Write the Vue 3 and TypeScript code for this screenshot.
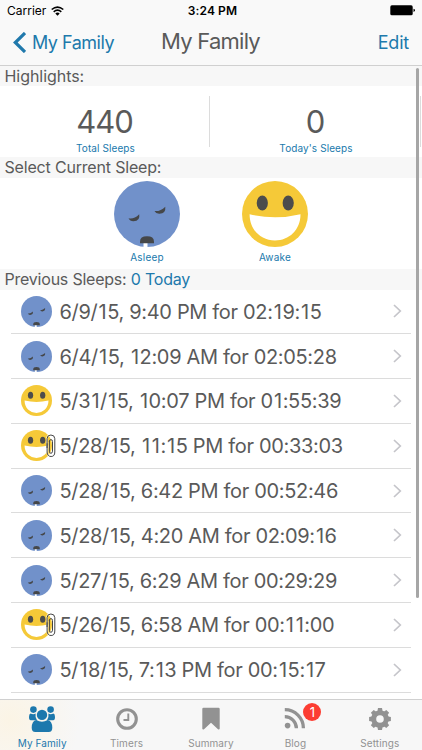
<script setup lang="ts">
import { defineComponent, h } from 'vue'

type Mood = 'asleep' | 'awake'

interface SleepEntry {
  mood: Mood
  label: string
  attachment?: boolean
}

interface Tab {
  name: string
  icon: 'family' | 'clock' | 'bookmark' | 'feed' | 'gear'
  active?: boolean
  badge?: number
}

const entries: SleepEntry[] = [
  { mood: 'asleep', label: '6/9/15, 9:40 PM for 02:19:15' },
  { mood: 'asleep', label: '6/4/15, 12:09 AM for 02:05:28' },
  { mood: 'awake', label: '5/31/15, 10:07 PM for 01:55:39' },
  { mood: 'awake', label: '5/28/15, 11:15 PM for 00:33:03', attachment: true },
  { mood: 'asleep', label: '5/28/15, 6:42 PM for 00:52:46' },
  { mood: 'asleep', label: '5/28/15, 4:20 AM for 02:09:16' },
  { mood: 'asleep', label: '5/27/15, 6:29 AM for 00:29:29' },
  { mood: 'awake', label: '5/26/15, 6:58 AM for 00:11:00', attachment: true },
  { mood: 'asleep', label: '5/18/15, 7:13 PM for 00:15:17' },
]

const tabs: Tab[] = [
  { name: 'My Family', icon: 'family', active: true },
  { name: 'Timers', icon: 'clock' },
  { name: 'Summary', icon: 'bookmark' },
  { name: 'Blog', icon: 'feed', badge: 1 },
  { name: 'Settings', icon: 'gear' },
]

const teeth = [0, 45, 90, 135, 180, 225, 270, 315]

// The narrow "1" gets its own span so that it can be spaced like the other digits.
const pieces = (label: string): string[] => label.split(/(1)/).filter(Boolean)

const Face = defineComponent({
  props: { mood: { type: String, required: true } },
  setup(props) {
    return () =>
      h(
        'svg',
        { viewBox: '0 0 66 66' },
        props.mood === 'asleep'
          ? [
              h('circle', { cx: 33, cy: 33, r: 33, fill: '#7191ca' }),
              h('path', { d: 'M14.5 37.3Q20 38.5 25.2 33.2Q26.5 40 19.5 40.2Q16 40.3 14.5 37.3Z', fill: '#454749' }),
              h('path', { d: 'M40.5 30Q46 30.8 51.3 25.7Q52 32.5 45.5 32.8Q42 33 40.5 30Z', fill: '#454749' }),
              h('path', { d: 'M29.5 61.5h4v5h-4z', fill: '#fff' }),
              h('path', { d: 'M26 60.5Q26 55.3 33 55.3Q40 55.3 40 60.5V62.3H26Z', fill: '#454749' }),
            ]
          : [
              h('circle', { cx: 33, cy: 33, r: 33, fill: '#f5c938' }),
              h('ellipse', { cx: 20.3, cy: 22, rx: 5.6, ry: 7.5, fill: '#4c4c4c' }),
              h('ellipse', { cx: 46.2, cy: 22, rx: 5.6, ry: 7.5, fill: '#4c4c4c' }),
              h('path', { d: 'M7.6 33.2Q33 39.4 58.5 33.2C58.5 49 47 59.4 33 59.4S7.6 49 7.6 33.2Z', fill: '#fff' }),
            ],
      )
  },
})
</script>

<template>
  <main class="screen">
    <header class="top">
      <div class="status">
        <div class="carrier">
          <span>Carrier</span>
          <svg class="wifi" viewBox="0 0 13 10">
            <path d="M.7 3.5Q6.5-1.4 12.3 3.5M2.7 5.8Q6.5 2.5 10.3 5.8" fill="none" stroke="#000" stroke-width="1.6" />
            <path d="M4.3 7.5Q6.5 5.6 8.7 7.5L6.5 9.8Z" />
          </svg>
        </div>
        <span class="time">3:24 PM</span>
        <svg class="battery" viewBox="0 0 26 11">
          <rect x=".3" y=".3" width="22.4" height="10" rx="1.6" />
          <path d="M23.5 3.7Q25 4 25 5.3T23.5 7Z" />
        </svg>
      </div>
      <nav class="nav">
        <button class="back">
          <svg viewBox="0 0 13 21"><path d="M12 1L2.3 10.5L12 20" fill="none" stroke="currentColor" stroke-width="3.2" /></svg>
          <span>My Family</span>
        </button>
        <h1>My Family</h1>
        <button class="edit">Edit</button>
      </nav>
    </header>

    <h2 class="section">Highlights:</h2>
    <div class="stats">
      <div class="stat"><strong>440</strong><small>Total Sleeps</small></div>
      <div class="stat"><strong>0</strong><small>Today's Sleeps</small></div>
    </div>

    <h2 class="section second">Select Current Sleep:</h2>
    <div class="moods">
      <button class="mood"><Face mood="asleep" class="big-face" /><span>Asleep</span></button>
      <button class="mood"><Face mood="awake" class="big-face" /><span>Awake</span></button>
    </div>

    <h2 class="section third">Previous Sleeps: <b>0 Today</b></h2>
    <ul class="list">
      <li v-for="entry in entries" :key="entry.label">
        <div class="thumb">
          <Face :mood="entry.mood" class="small-face" />
          <svg v-if="entry.attachment" class="clip" viewBox="0 0 10 24">
            <path d="M1 14V4.7Q1 1 4.8 1T8.8 4.7V18Q8.8 22.5 5.1 22.5T1.4 18V8" fill="none" stroke="#fff" stroke-width="2.2" opacity=".6" />
            <path d="M1.1 14V4.7Q1.1 1 4.9 1T8.8 4.7V18Q8.8 22.5 5.1 22.5T1.1 18V9.3M3.4 7V17.2Q3.4 19.3 4.9 19.3T6.5 17.2V7.5Q6.5 5.6 4.9 5.6T3.4 7.5" fill="none" stroke="#454545" stroke-width="1" />
          </svg>
        </div>
        <span class="label"><span v-for="(piece, i) in pieces(entry.label)" :key="i" :class="{ one: piece === '1' }">{{ piece }}</span></span>
        <svg class="chevron" viewBox="0 0 9 14"><path d="M1 1L7.3 7L1 13" fill="none" stroke="#c5c5ca" stroke-width="1.7" /></svg>
      </li>
    </ul>

    <footer class="tabs">
      <button v-for="tab in tabs" :key="tab.name" class="tab" :class="{ active: tab.active }">
        <span class="glyph">
          <svg v-if="tab.icon === 'family'" viewBox="0 0 26 26" fill="currentColor">
            <circle cx="4.4" cy="3.6" r="3.3" /><circle cx="21.6" cy="3.6" r="3.3" />
            <path d="M1.6 7.6Q4.4 9.1 6.6 7.6Q5.9 11.8 8 14.3H2Q0 14.5 0 11Q0 8 1.6 7.6Z" />
            <path d="M24.4 7.6Q21.6 9.1 19.4 7.6Q20.1 11.8 18 14.3H24Q26 14.5 26 11Q26 8 24.4 7.6Z" />
            <circle cx="13" cy="8.9" r="5.2" />
            <path d="M7.3 14Q13 17.5 18.7 14Q23.3 15 23.3 21.8Q23.3 26 19.7 26H6.3Q2.7 26 2.7 21.8Q2.7 15 7.3 14Z" />
          </svg>
          <svg v-else-if="tab.icon === 'clock'" viewBox="0 0 26 26" fill="none" stroke="currentColor">
            <circle cx="13" cy="13" r="9.3" stroke-width="3.1" />
            <path d="M14.3 7.5V14H9.5" stroke-width="1.9" />
          </svg>
          <svg v-else-if="tab.icon === 'bookmark'" viewBox="0 0 26 26" fill="currentColor">
            <path d="M4.3 3Q4.3 1.7 5.6 1.7H20.4Q21.7 1.7 21.7 3V22.8Q21.3 24 20 23.2L13 16.7L6 23.2Q4.7 24 4.3 22.8Z" />
          </svg>
          <svg v-else-if="tab.icon === 'feed'" viewBox="0 0 26 26" fill="none" stroke="currentColor" stroke-width="3.3">
            <circle cx="5.6" cy="19.6" r="2.8" fill="currentColor" stroke="none" />
            <path d="M2.8 10.7A11.6 11.6 0 0 1 14.4 22.3M2.8 3.7A18.6 18.6 0 0 1 21.4 22.3" />
          </svg>
          <svg v-else viewBox="0 0 26 26" fill="currentColor">
            <circle cx="13" cy="13" r="6.3" fill="none" stroke="currentColor" stroke-width="5" />
            <path v-for="angle in teeth" :key="angle" d="M10.3 6L11 2.1H15L15.7 6Z" :transform="`rotate(${angle} 13 13)`" />
          </svg>
          <i v-if="tab.badge" class="badge">{{ tab.badge }}</i>
        </span>
        <span class="tab-name">{{ tab.name }}</span>
      </button>
    </footer>
    <div class="scrollbar"></div>
  </main>
</template>

<style>
body {
  margin: 0;
  overflow: hidden;
}
</style>

<style scoped>
.screen {
  position: relative;
  width: 422px;
  height: 750px;
  overflow: hidden;
  display: flex;
  flex-direction: column;
  background: #fff;
  color: #5a5a5a;
  font-family: Inter, Roboto, "Liberation Sans", sans-serif;
}
button {
  border: 0;
  padding: 0;
  background: none;
  font: inherit;
  color: #2079ac;
}
svg {
  display: block;
}
.top {
  box-sizing: border-box;
  flex: none;
  height: 66px;
  background: #f9f9f9;
  border-bottom: 1px solid #d0d0d0;
}
.status {
  display: grid;
  grid-template-columns: 1fr auto 1fr;
  align-items: center;
  height: 21px;
  padding: 0 6px 0 7px;
  color: #000;
  font-size: 12px;
}
.carrier {
  display: flex;
  align-items: center;
  gap: 5px;
}
.wifi {
  width: 13px;
  height: 10px;
}
.time {
  font-weight: 600;
  letter-spacing: .1px;
  padding-left: 2px;
}
.battery {
  justify-self: end;
  width: 26px;
  height: 11px;
}
.nav {
  display: grid;
  grid-template-columns: 1fr auto 1fr;
  align-items: center;
  height: 43px;
  padding: 0 13px;
}
.back {
  display: flex;
  align-items: center;
  gap: 6px;
  font-size: 18px;
  letter-spacing: -.5px;
}
.back svg {
  width: 13px;
  height: 21px;
}
.nav h1 {
  margin: 0 1px 3px 0;
  font-size: 22px;
  font-weight: 400;
  letter-spacing: -.75px;
}
.edit {
  justify-self: end;
  font-size: 18px;
  letter-spacing: -.2px;
}
.section {
  flex: none;
  box-sizing: border-box;
  height: 20px;
  margin: 0;
  padding-left: 4.5px;
  background: #f7f7f7;
  font-size: 16px;
  line-height: 20px;
  font-weight: 400;
  letter-spacing: -.05px;
  white-space: pre;
}
.section b {
  font-weight: 400;
  color: #2079ac;
}
.second {
  height: 21px;
  letter-spacing: -.18px;
}
.third {
  height: 20.5px;
  letter-spacing: -.22px;
}
.stats {
  flex: none;
  display: grid;
  grid-template-columns: 210px 211px;
  height: 71px;
  padding-top: 10px;
  box-sizing: border-box;
}
.stat {
  display: flex;
  flex-direction: column;
  align-items: center;
  height: 51px;
  border-right: 1px solid #dcdcdc;
  box-sizing: border-box;
}
.stat strong {
  margin-top: 7px;
  font-size: 31px;
  line-height: 38px;
  font-weight: 400;
  letter-spacing: -1px;
}
.stat small {
  padding-left: 2px;
  font-size: 10px;
  line-height: 14px;
  letter-spacing: .1px;
  color: #2079ac;
}
.moods {
  flex: none;
  display: flex;
  justify-content: center;
  gap: 62px;
  height: 91px;
  padding-top: 3px;
  box-sizing: border-box;
}
.mood {
  display: flex;
  flex-direction: column;
  align-items: center;
  justify-content: flex-start;
  font-size: 10px;
  line-height: 13px;
  letter-spacing: .2px;
}
.mood span {
  margin-top: 4px;
}
.big-face {
  width: 66px;
  height: 66px;
}
.list {
  flex: none;
  list-style: none;
  margin: 0;
  padding: 0 11px;
}
.list li {
  box-sizing: border-box;
  display: flex;
  align-items: center;
  height: 44.8px;
  padding-left: 9.5px;
  border-bottom: 1px solid #dcdcdc;
}
.thumb {
  position: relative;
  width: 31px;
  margin-right: 8px;
}
.small-face {
  width: 31px;
  height: 31px;
}
.clip {
  position: absolute;
  left: 25.5px;
  top: 3.5px;
  width: 10px;
  height: 24px;
}
.label {
  flex: 1;
  padding-top: 1px;
  font-size: 20px;
  letter-spacing: -.33px;
  white-space: pre;
}
.one {
  padding: 0 .8px 0 1.2px;
}
.chevron {
  width: 9px;
  height: 14px;
  margin-right: 9px;
}
.tabs {
  position: absolute;
  inset: auto 0 0;
  display: grid;
  grid-template-columns: repeat(5, 1fr);
  box-sizing: border-box;
  height: 51px;
  border-top: 1px solid #d0d0d0;
  background: radial-gradient(circle at 10px 20px, #fbf4e5 0, #f7f7f7 70px);
}
.tab {
  display: flex;
  flex-direction: column;
  align-items: center;
  padding-top: 6px;
  color: #929292;
}
.tab.active {
  color: #1c78ad;
}
.glyph {
  position: relative;
}
.glyph svg {
  width: 26px;
  height: 26px;
}
.tab-name {
  margin-top: 4.5px;
  font-size: 10px;
  line-height: 13px;
  letter-spacing: .1px;
}
.badge {
  position: absolute;
  left: 21px;
  top: -3px;
  width: 18px;
  height: 18px;
  border-radius: 9px;
  background: #fc3d32;
  color: #fff;
  font-size: 13px;
  line-height: 18px;
  font-style: normal;
  text-align: center;
}
.scrollbar {
  position: absolute;
  left: 416px;
  top: 68px;
  width: 3px;
  height: 530px;
  border-radius: 2px;
  background: #a6a6a6;
}
</style>
